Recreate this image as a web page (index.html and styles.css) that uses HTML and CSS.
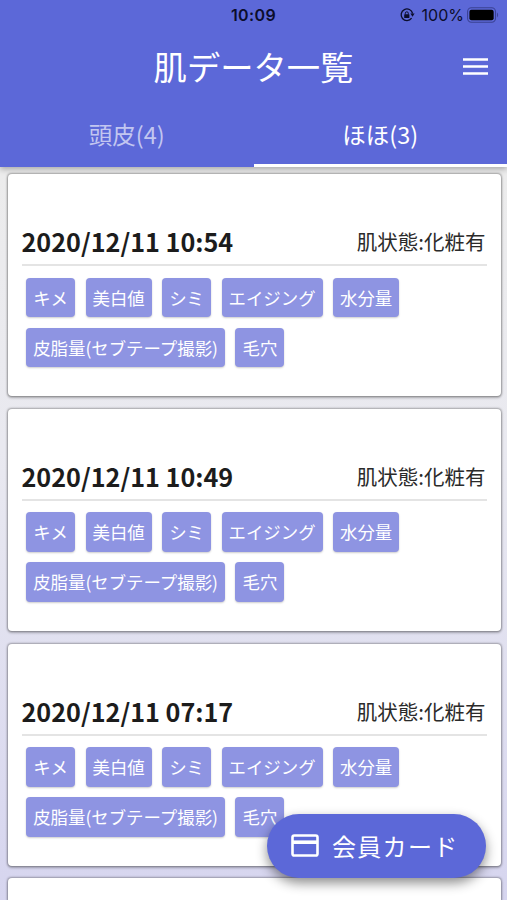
FILE: index.html
```html
<!DOCTYPE html>
<html lang="ja">
<head>
    <meta charset="UTF-8">
    <meta name="viewport" content="width=device-width, initial-scale=1.0">
    <title>肌データ一覧</title>
    <link rel="stylesheet" href="styles.css">
</head>
<body>
    <header class="header">
        <div class="status-bar">
            <span class="time">10:09</span>
            <div class="status-right">
                <svg class="lock" viewBox="0 0 16 16">
                    <path d="M12.6 11.2A5.8 5.8 0 1 1 13.6 6.5" fill="none" stroke="#0b0d2c" stroke-width="1.3"/>
                    <path d="M11.4 6.6h4.2l-2.1 3.2z" fill="#0b0d2c"/>
                    <rect x="5.2" y="7.2" width="5.2" height="3.9" rx=".6" fill="#0b0d2c"/>
                    <path d="M6.3 7.5V6.3a1.5 1.5 0 0 1 3 0v1.2" fill="none" stroke="#0b0d2c"/>
                </svg>
                <span class="percent">100%</span>
                <svg class="battery" viewBox="0 0 33 16">
                    <rect x=".6" y=".6" width="28.8" height="14.8" rx="4" fill="none" stroke="#3a4193" stroke-width="1.1"/>
                    <rect x="2.5" y="2.5" width="25" height="11" rx="2.2" fill="#000"/>
                    <path d="M31 5.5c1.5.8 1.5 4.2 0 5z" fill="#3a4193"/>
                </svg>
            </div>
        </div>
        <div class="title-bar">
            <h1>肌データ一覧</h1>
            <svg class="menu" viewBox="0 0 25 17">
                <path d="M0 1.5h25M0 8.5h25M0 15.5h25" stroke="#fff" stroke-width="2.6"/>
            </svg>
        </div>
        <nav class="tabs">
            <div class="tab">頭皮(4)</div>
            <div class="tab active">ほほ(3)</div>
        </nav>
    </header>

    <main class="list">
        <section class="card">
            <div class="card-head">
                <h2>2020/12/11 10:54</h2>
                <span>肌状態:化粧有</span>
            </div>
            <div class="chips">
                <span class="chip">キメ</span>
                <span class="chip">美白値</span>
                <span class="chip">シミ</span>
                <span class="chip">エイジング</span>
                <span class="chip">水分量</span>
                <span class="chip">皮脂量(セブテープ撮影)</span>
                <span class="chip">毛穴</span>
            </div>
        </section>
        <section class="card">
            <div class="card-head">
                <h2>2020/12/11 10:49</h2>
                <span>肌状態:化粧有</span>
            </div>
            <div class="chips">
                <span class="chip">キメ</span>
                <span class="chip">美白値</span>
                <span class="chip">シミ</span>
                <span class="chip">エイジング</span>
                <span class="chip">水分量</span>
                <span class="chip">皮脂量(セブテープ撮影)</span>
                <span class="chip">毛穴</span>
            </div>
        </section>
        <section class="card">
            <div class="card-head">
                <h2>2020/12/11 07:17</h2>
                <span>肌状態:化粧有</span>
            </div>
            <div class="chips">
                <span class="chip">キメ</span>
                <span class="chip">美白値</span>
                <span class="chip">シミ</span>
                <span class="chip">エイジング</span>
                <span class="chip">水分量</span>
                <span class="chip">皮脂量(セブテープ撮影)</span>
                <span class="chip">毛穴</span>
            </div>
        </section>
        <section class="card last"></section>
    </main>

    <button class="fab">
        <svg viewBox="0 0 28 23">
            <rect x="1.5" y="1.5" width="25" height="20" rx="1.8" fill="none" stroke="#fff" stroke-width="2.6"/>
            <path d="M1.5 8.2h25" stroke="#fff" stroke-width="3.6"/>
        </svg>
        <span>会員カード</span>
    </button>
</body>
</html>
```
FILE: styles.css
```css
* {
    box-sizing: border-box;
}
body {
    margin: 0;
    height: 900px;
    overflow: hidden;
    display: flex;
    flex-direction: column;
    font-family: "Noto Sans CJK JP", sans-serif;
    color: #1c1c1c;
    background: linear-gradient(#ececec 170px, #e9e9f0 450px, #d6d5ef 900px);
}
h1, h2 {
    margin: 0;
}
.header {
    flex: none;
    height: 167px;
    background-color: #5c68d8;
    color: #fff;
    box-shadow: 0 2px 6px rgba(0, 0, 0, 0.3);
}
.status-bar {
    display: grid;
    grid-template-columns: 1fr auto 1fr;
    align-items: center;
    height: 30px;
    padding: 0 8px;
    color: #0b0d2c;
    font-family: Inter, sans-serif;
    font-size: 16px;
    line-height: 30px;
}
.time {
    grid-column: 2;
    font-weight: 600;
    letter-spacing: 0.4px;
}
.status-right {
    display: flex;
    justify-content: flex-end;
    align-items: center;
}
.lock {
    width: 16px;
    height: 16px;
    margin-right: 7px;
}
.percent {
    margin-right: 3px;
}
.battery {
    width: 32px;
    height: 16px;
}
.title-bar {
    display: grid;
    grid-template-columns: 1fr auto 1fr;
    align-items: center;
    height: 74px;
    padding: 0 19px;
}
.title-bar h1 {
    grid-column: 2;
    font-size: 33.3px;
    font-weight: 400;
    line-height: 72px;
    height: 74px;
}
.menu {
    justify-self: end;
    width: 25px;
    height: 17px;
    margin-top: -2px;
}
.tabs {
    display: flex;
    height: 63px;
}
.tab {
    flex: 1;
    border-bottom: 3px solid transparent;
    color: #c2c6f0;
    font-size: 23.5px;
    line-height: 61px;
    text-align: center;
}
.tab.active {
    border-bottom-color: #fff;
    color: #fff;
}
.list {
    flex: 1;
    min-height: 0;
    display: flex;
    flex-direction: column;
    gap: 12.6px;
    padding: 7.4px 6.5px 0 7.5px;
}
.card {
    flex: none;
    height: 222px;
    padding: 48px 14px 0;
    background-color: #fff;
    border-radius: 4px;
    box-shadow: 0 0 2px 0.5px rgba(0, 0, 0, 0.3), 0 2px 3px rgba(0, 0, 0, 0.2);
}
/* the next card only peeks in at the bottom */
.card.last {
    flex: 1;
    height: auto;
    min-height: 0;
    padding: 0;
    border-radius: 4px 4px 0 0;
}
.card-head {
    display: flex;
    justify-content: space-between;
    height: 44px;
    border-bottom: 2px solid #e4e4e4;
}
.card-head h2 {
    font-size: 25.2px;
    font-weight: 700;
    line-height: 38px;
}
.card-head span {
    margin-right: 1px;
    font-size: 20.5px;
    line-height: 38px;
    color: #2a2a2a;
}
.chips {
    display: flex;
    flex-wrap: wrap;
    gap: 10.5px;
    padding: 11.5px 4px 0 4.7px;
}
.chip {
    height: 39.5px;
    padding: 0 7px;
    border-radius: 4px;
    background-color: #8e94e2;
    box-shadow: 0 1px 2px rgba(0, 0, 0, 0.2);
    color: #fff;
    font-size: 17.42px;
    line-height: 39px;
}
.fab {
    position: absolute;
    left: 267px;
    top: 813.5px;
    display: flex;
    align-items: center;
    gap: 13px;
    width: 218.5px;
    height: 64.5px;
    padding: 0 0 0 24px;
    border: none;
    border-radius: 33px;
    background-color: #5c68d8;
    box-shadow: 0 5px 12px rgba(0, 0, 0, 0.45);
    color: #fff;
    font-family: inherit;
    font-size: 24px;
    letter-spacing: 1.3px;
}
.fab svg {
    width: 28px;
    height: 23px;
}
```
